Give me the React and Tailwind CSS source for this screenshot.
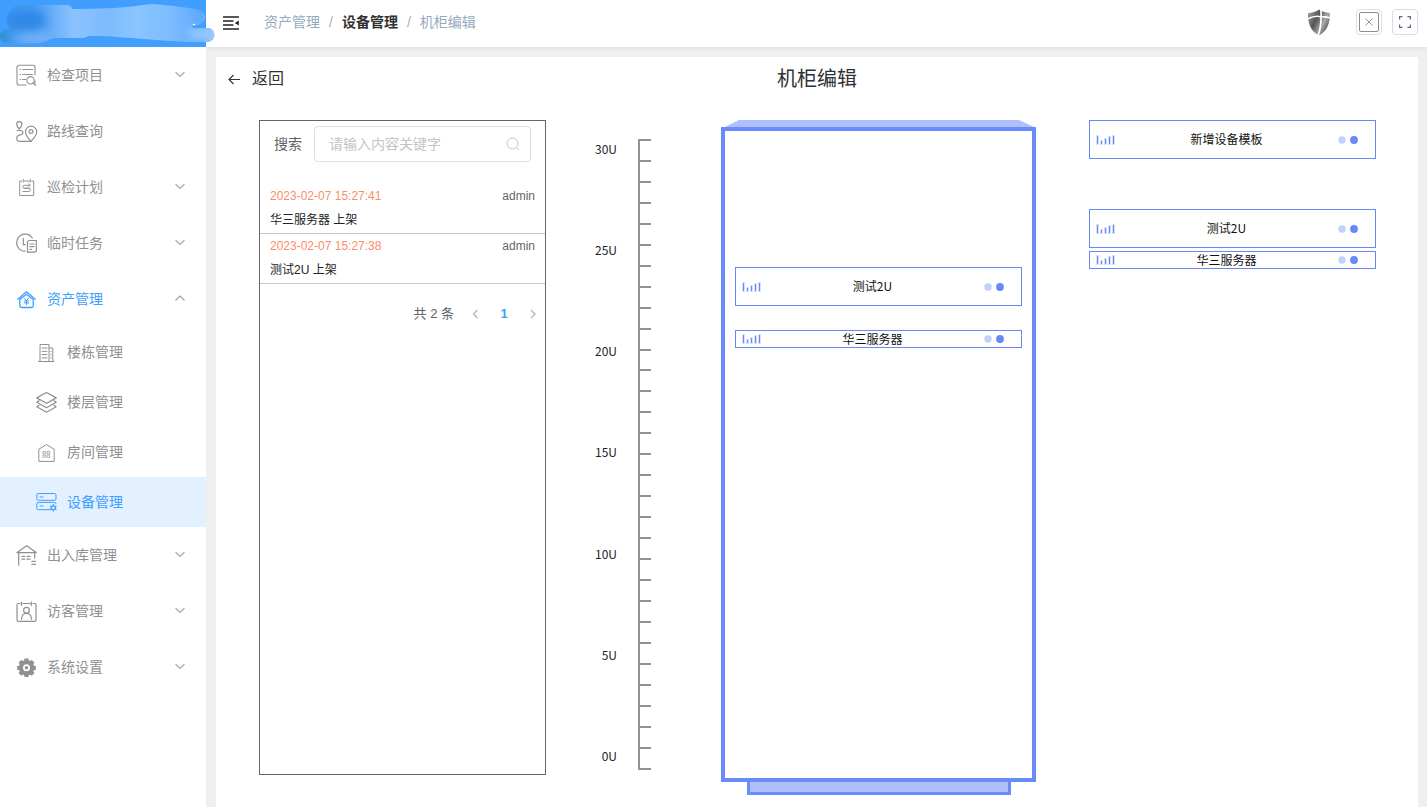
import React from "react";

const CJK = "font-['Liberation_Sans','Noto_Sans_CJK_SC',sans-serif]";
const CJK_ONLY = "font-['Noto_Sans_CJK_SC',sans-serif]";

function Icon({ children, width = 1.1 }) {
  return (
    <svg viewBox="0 0 22 22" className="size-[22px] shrink-0" fill="none" stroke="currentColor" strokeWidth={width} strokeLinecap="round" strokeLinejoin="round" aria-hidden="true">
      {children}
    </svg>
  );
}

const icons = {
  inspect: (
    <Icon>
      <path d="M10 21H3a2 2 0 0 1-2-2V3.300a2 2 0 0 1 2-2h14.500a1.500 1.500 0 0 1 1.500 1.500V11M19 17v2.500" />
      <path d="M4 5.500h.6M7 5.500h9.500M4 10.500h.6M7 10.500h9.500M4 15.500h.6M6.500 15.500h3" />
      <circle cx="14.500" cy="16.300" r="3.700" />
      <path d="M17.200 19l2.500 2.500" />
    </Icon>
  ),
  route: (
    <Icon width={1.2}>
      <path d="M3.200 9C1.800 7.500.7 6 .7 4.200a2.600 2.600 0 0 1 5.200 0C5.900 6 4.700 7.500 3.200 9z" />
      <path d="M1 10.500h3c2.200.2 3 1 3 2.200s-1 1.900-2.300 2.100C2 15 .8 16.300.8 18.200.8 20.300 2 21.400 4 21.400h11" />
      <path d="M15 21.400c-3.300-3.500-5.500-6.400-5.500-9.600a5.600 5.600 0 0 1 11.200 0c0 3.200-2.300 6.100-5.700 9.600z" />
      <circle cx="15" cy="11.500" r="1.900" />
    </Icon>
  ),
  plan: (
    <Icon width={1}>
      <path d="M5.500 5H3.700v14.500h14V5h-2M8.500 5h4.500M7.200 3.300v3M14.200 3.300v3" />
      <path d="M14 9.300H8.200a1.400 1.400 0 0 0 0 2.900h4.500a1.600 1.600 0 0 1 0 3.300H7.500M12.800 8l1.400 1.300-1.400 1.300M9 12.200h4M7 15.500h2" />
    </Icon>
  ),
  task: (
    <Icon width={1.2}>
      <path d="M9 19.200A8.500 8.500 0 1 1 16.300 6M7.300 6.500v6.200h2" />
      <path d="M11.500 10.500v9.700h6.500c1.400 0 2.300-.8 2.300-2.200V8.500h-6.800a2 2 0 0 0-2 2zM14 12h4M14 14.700h4M14 17.400h1.500" />
    </Icon>
  ),
  asset: (
    <Icon width={1.3}>
      <path d="M1.800 11.200l8.700-7.400 8.700 7.400" />
      <path d="M3.800 11.600v6.100c0 1.200.6 1.800 1.800 1.800h9.800c1.200 0 1.800-.6 1.800-1.800v-6.100l-6.700-5.300z" />
      <path d="M8.600 10.400l1.900 2.300 1.900-2.300M8.300 13h4.400M8.300 14.900h4.400M10.500 12.700v4" strokeWidth="1" />
    </Icon>
  ),
  building: (
    <Icon width={1}>
      <path d="M2.500 20.500h15.500M4 20V3.500h9V20M13 7h3.800v13M6 7h5M6 10.300h5M6 13.600h5M6 16.900h5M15 10.300v.5M15 13.500v.5M15 16.700v.5" />
    </Icon>
  ),
  floors: (
    <Icon width={1.2}>
      <path d="M10.500 1.500l9.800 5.400-9.800 5.400L.7 6.900z" />
      <path d="M3 9.700L.8 11.300l9.700 5.500 9.700-5.500L18 9.700M3 14.300L.8 15.800l9.700 5.400 9.700-5.400-2.200-1.500" />
    </Icon>
  ),
  room: (
    <Icon width={1}>
      <path d="M2.800 20V8.300L10.500 3.500l7.700 4.800V20z" />
      <path d="M7.300 10.500h2.300v2.300H7.300zM11.500 10.500h2.300v2.300h-2.300zM7.300 14h2.300v2.300H7.300zM11.500 14h2.300v2.300h-2.300z" strokeWidth=".7" />
    </Icon>
  ),
  device: (
    <Icon width={1}>
      <rect x=".8" y="2.500" width="19.200" height="6.800" rx="1.500" />
      <path d="M14 18.700H2.300a1.500 1.500 0 0 1-1.500-1.500v-4.300a1.500 1.500 0 0 1 1.500-1.500h16.200A1.500 1.500 0 0 1 20 12.900M4 6h3M4 15h3" />
      <circle cx="17.300" cy="16.800" r="2" strokeWidth="1.300" />
      <path d="M17.300 14.300v-.6M17.300 19.900v-.6M15.200 15.600l-.5-.3M19.900 18.300l-.5-.3M15.200 18l-.5.300M19.900 15.300l-.5.300" strokeWidth="1.400" />
    </Icon>
  ),
  warehouse: (
    <Icon width={1.2}>
      <path d="M1 8.600l9.700-6.900 9.500 6.900zM2.700 8.600v12.600M18.700 8.600v5.500" />
      <path d="M6 12.300h2.700M11 12.300h3M6 15.200h2.700M11 15.200h3M15.800 17.300h3.700M15.800 20.300h3.700" />
    </Icon>
  ),
  visitor: (
    <Icon width={1.2}>
      <path d="M4 3.500H2.300A1.300 1.300 0 0 0 1 4.800v15.300a1.300 1.300 0 0 0 1.300 1.300h16.400a1.300 1.300 0 0 0 1.300-1.300V4.800a1.300 1.300 0 0 0-1.300-1.300H17M7 3.500h7M5.500 2v3.500M15.300 2v3.500" />
      <circle cx="10.500" cy="10.200" r="2.900" />
      <path d="M5.500 19.300c.2-3.600 2-6 5-6s4.900 2.400 5.100 6" />
    </Icon>
  ),
  settings: (
    <Icon width={0}>
      <path
        fill="currentColor"
        fillRule="evenodd"
        d="M8.600 2.500h3.800l.5 2.100 1 .4 1.900-1.100 2.600 2.600-1.100 1.900.4 1 2.100.5v3.800l-2.100.5-.4 1 1.100 1.900-2.600 2.600-1.900-1.100-1 .4-.5 2.100H8.600l-.5-2.100-1-.4-1.900 1.100-2.600-2.600 1.100-1.900-.4-1-2.100-.5V9.900l2.100-.5.4-1-1.100-1.900 2.600-2.600L7.100 5l1-.4zM10.500 8.300a3.500 3.500 0 1 0 0 7 3.500 3.500 0 0 0 0-7z"
      />
      <circle cx="10.500" cy="11.800" r="1.700" fill="currentColor" />
    </Icon>
  ),
};

const menu = [
  { label: "检查项目", icon: "inspect", arrow: true },
  { label: "路线查询", icon: "route" },
  { label: "巡检计划", icon: "plan", arrow: true },
  { label: "临时任务", icon: "task", arrow: true },
  {
    label: "资产管理",
    icon: "asset",
    arrow: true,
    open: true,
    children: [
      { label: "楼栋管理", icon: "building" },
      { label: "楼层管理", icon: "floors" },
      { label: "房间管理", icon: "room" },
      { label: "设备管理", icon: "device", active: true },
    ],
  },
  { label: "出入库管理", icon: "warehouse", arrow: true },
  { label: "访客管理", icon: "visitor", arrow: true },
  { label: "系统设置", icon: "settings", arrow: true },
];

function Brand() {
  return (
    <div className="h-[47px] bg-[#409eff]">
      <svg viewBox="0 0 216 47" className="h-[47px] w-[216px]" aria-hidden="true">
        <defs>
          <linearGradient id="smear" x1="0" x2="216" gradientUnits="userSpaceOnUse">
            <stop offset="0" stopColor="#3f97ee" />
            <stop offset=".16" stopColor="#4a9cf4" />
            <stop offset=".34" stopColor="#8ac2fe" />
            <stop offset=".5" stopColor="#7dbbfe" />
            <stop offset=".63" stopColor="#8cc4ff" />
            <stop offset=".8" stopColor="#7bbbff" />
            <stop offset=".93" stopColor="#5caaff" />
            <stop offset="1" stopColor="#a9d1fe" />
          </linearGradient>
          <filter id="soft" x="-40%" y="-60%" width="180%" height="220%">
            <feGaussianBlur stdDeviation="5" />
          </filter>
          <clipPath id="smearShape">
            <path d="M6.500 21C6 15 10 7 18 5h48c4 0 6 2 6 4 28 0 45-1 60-2.500 8-1 14-2.500 22-2.500 14 1 28 3 38 4.500 8 1 13 4 13 8.500 0 5-4 8-13 9 0 2 2 2 6 2h11c4 1 5.500 4 5.500 7s-2 7-7 7c-26 1-60-3-85-4.500-10-1-20-1.500-34-1.500-2 1-3 2-7 2H58c-7 0-9 2-14 4-6 2-34 2-39 0C1 42 0 39 0 36c0-4 4-7 10-7-2-2-3-5-3.500-8z" />
          </clipPath>
        </defs>
        <g clipPath="url(#smearShape)">
          <rect width="216" height="47" fill="url(#smear)" />
          <ellipse cx="26" cy="20" rx="20" ry="10" fill="#2f87e6" filter="url(#soft)" />
          <ellipse cx="34" cy="39" rx="20" ry="5" fill="#78b5f6" filter="url(#soft)" />
          <ellipse cx="0" cy="37" rx="7" ry="8" fill="#2f8fc4" filter="url(#soft)" />
          <ellipse cx="201" cy="34" rx="14" ry="6" fill="#9ccbff" filter="url(#soft)" />
        </g>
        <path d="M193 25l2-1" stroke="#fff" strokeWidth="1.300" />
      </svg>
    </div>
  );
}

function Chevron({ open }) {
  return (
    <svg viewBox="0 0 12 8" className="mr-5 mb-[3px] ml-auto h-2 w-3" fill="none" stroke={open ? "#8fa0b5" : "#b9a396"} strokeWidth="1.100" aria-hidden="true">
      <path d={open ? "M1.500 6.500L6 2l4.500 4.500" : "M1.500 2L6 6.500 10.500 2"} />
    </svg>
  );
}

function Sidebar() {
  return (
    <aside className="relative z-20 w-[206px] shrink-0 bg-white">
      <Brand />
      <nav>
        <ul>
          {menu.map((item) => (
            <li key={item.label}>
              <a href="#" className={`flex h-14 items-center gap-[9px] pl-4 text-sm ${item.open ? "text-[#409eff]" : "text-[#909090]"}`}>
                {icons[item.icon]}
                <span>{item.label}</span>
                {item.arrow && <Chevron open={item.open} />}
              </a>
              {item.children && (
                <ul>
                  {item.children.map((sub) => (
                    <li key={sub.label}>
                      <a href="#" className={`flex h-[50px] items-center gap-[9px] pl-9 text-sm ${sub.active ? "bg-[#e2f0ff] text-[#409eff]" : "text-[#909090]"}`}>
                        {icons[sub.icon]}
                        <span>{sub.label}</span>
                      </a>
                    </li>
                  ))}
                </ul>
              )}
            </li>
          ))}
        </ul>
      </nav>
    </aside>
  );
}

function TopBar() {
  return (
    <header className="relative z-10 flex h-[47px] items-center bg-white pr-[9px] pb-[3px] pl-[17px] shadow-[0_1px_4px_rgba(0,21,41,0.08)]">
      <button type="button" aria-label="收起菜单" className="mt-[2px] mr-[25px]">
        <svg viewBox="0 0 16 14" className="h-[14px] w-4" aria-hidden="true">
          <path d="M0 1h16M0 5h10.500M0 9h10.500M0 13h16" stroke="#222" strokeWidth="1.600" />
          <path d="M15.800 4.500v5L11.800 7z" fill="#222" />
        </svg>
      </button>
      <nav aria-label="面包屑" className="flex items-center text-sm text-[#97a8be]">
        <a href="#">资产管理</a>
        <span className="mx-[9px] text-[#a8adb8]">/</span>
        <a href="#" className="font-bold text-[#303133]">设备管理</a>
        <span className="mx-[9px] text-[#a8adb8]">/</span>
        <span>机柜编辑</span>
      </nav>
      <div className="ml-auto flex items-center gap-[10px]">
        <svg viewBox="0 0 24 27" className="mr-[15px] h-[27px] w-6" aria-hidden="true">
          <defs>
            <linearGradient id="steel" x1="0" x2="1" y1="0" y2=".6">
              <stop offset="0" stopColor="#aaa" />
              <stop offset=".45" stopColor="#555" />
              <stop offset=".75" stopColor="#aaa" />
              <stop offset="1" stopColor="#555" />
            </linearGradient>
          </defs>
          <path d="M12 .5c3 2 7 3.300 10.700 3.300.7 10-2.700 18.700-10.700 22.700C4 22.500.3 13.500 1 4.200 5 4 9 2.700 12 .5z" fill="url(#steel)" />
          <path d="M1 9.800c3.500-2 7-2.700 11-2.500 4 .1 7.500.4 11 1.500" stroke="#fff" strokeWidth="1.700" fill="none" />
          <path d="M13.800 0c.8 9 .3 18-2.800 27" stroke="#fff" strokeWidth="1.700" fill="none" />
        </svg>
        <button type="button" aria-label="关闭" className="grid size-[26px] place-items-center rounded border border-[#dcdfe6]">
          <svg viewBox="0 0 20 20" className="size-5" fill="none" aria-hidden="true">
            <rect x=".5" y=".5" width="19" height="19" rx="1.500" stroke="#8c8c8c" />
            <path d="M6.500 6.500l7 7M13.500 6.500l-7 7" stroke="#999" />
          </svg>
        </button>
        <button type="button" aria-label="全屏" className="grid size-[26px] place-items-center rounded border border-[#d8dce5]">
          <svg viewBox="0 0 12 12" className="size-3" fill="none" stroke="#5d6b80" strokeWidth="1.200" aria-hidden="true">
            <path d="M.6 3.500V.6h2.900M8.500.6h2.900v2.900M11.400 8.500v2.900H8.500M3.500 11.400H.6V8.500" />
          </svg>
        </button>
      </div>
    </header>
  );
}

const logs = [
  { time: "2023-02-07 15:27:41", user: "admin", text: "华三服务器 上架" },
  { time: "2023-02-07 15:27:38", user: "admin", text: "测试2U 上架" },
];

function LogPanel() {
  return (
    <section className="border border-[#666] pt-[5px]">
      <form className="flex items-center gap-3 px-[14px]">
        <label htmlFor="keyword" className="shrink-0 text-sm text-[#606266]">搜索</label>
        <div className="flex h-9 min-w-0 flex-1 items-center rounded border border-[#dcdfe6] pr-[10px] pl-[14px]">
          <input id="keyword" type="text" placeholder="请输入内容关键字" className="min-w-0 flex-1 text-sm outline-none placeholder:text-[#c0c4cc]" />
          <svg viewBox="0 0 14 14" className="size-[14px] shrink-0" fill="none" stroke="#c0c4cc" aria-hidden="true">
            <circle cx="6.500" cy="6.500" r="5.500" />
            <path d="M10.500 10.500l2.500 2.500" />
          </svg>
        </div>
      </form>
      <ul className="mt-[22px] text-xs">
        {logs.map((log) => (
          <li key={log.time} className="border-b border-[#c8c8c8] px-[10px] pb-px">
            <div className="flex justify-between leading-6">
              <time className="text-[#fb8d6b]">{log.time}</time>
              <span className="text-[#666]">{log.user}</span>
            </div>
            <p className="leading-6 text-[#222]">{log.text}</p>
          </li>
        ))}
      </ul>
      <nav aria-label="分页" className="mt-4 flex h-7 items-center justify-end gap-[5px] text-[13px]">
        <span className="mr-1 text-[#606266]">共 2 条</span>
        <button type="button" aria-label="上一页" disabled className="grid h-7 w-6 place-items-center">
          <svg viewBox="0 0 8 12" className="h-3 w-2" fill="none" stroke="#b4b8c0" strokeWidth="1.400" aria-hidden="true"><path d="M6.500 2L2.500 6l4 4" /></svg>
        </button>
        <button type="button" aria-current="page" className="h-7 w-6 font-bold text-[#409eff]">1</button>
        <button type="button" aria-label="下一页" disabled className="grid h-7 w-6 place-items-center">
          <svg viewBox="0 0 8 12" className="h-3 w-2" fill="none" stroke="#b4b8c0" strokeWidth="1.400" aria-hidden="true"><path d="M2 2l4 4-4 4" /></svg>
        </button>
      </nav>
    </section>
  );
}

const ticks = Array.from({ length: 31 }, (_, i) => i);

function Ruler() {
  return (
    <div className="flex gap-[21px] pt-[19px]">
      <ol className="flex h-[631px] w-[71px] flex-col justify-between pb-1 text-right text-xs text-[#222]">
        {[30, 25, 20, 15, 10, 5, 0].map((u) => (
          <li key={u} className={`leading-5 ${CJK_ONLY}`}>{u}U</li>
        ))}
      </ol>
      <div className="flex h-[631px] w-[13px] flex-col justify-between border-l-2 border-[#929292]">
        {ticks.map((t) => (
          <span key={t} className="h-[2px] bg-[#929292]" />
        ))}
      </div>
    </div>
  );
}

function Device({ name, tall }) {
  return (
    <button type="button" className={`flex w-full items-center border border-[#6888f7] bg-white pr-[17px] pl-[6px] ${tall ? "h-[39px]" : "h-[18px]"}`}>
      <svg viewBox="0 0 19 10" className="h-[10px] w-[19px] shrink-0" stroke="#6888f7" aria-hidden="true">
        <path d="M1.500 1v8M5.500 6v3M9.500 4v5M13.500 2v7M17.500 1v8" />
        <path d="M1.500 0v10M5.500 5v5M9.500 3v7M13.500 1v9M17.500 0v10" strokeWidth="3" opacity=".25" />
      </svg>
      <span className={`flex-1 text-center text-xs leading-4 text-[#111] ${tall ? "pb-[2px]" : ""} ${CJK_ONLY}`}>{name}</span>
      <svg viewBox="0 0 20 8" className="h-2 w-5 shrink-0" aria-hidden="true">
        <circle cx="4" cy="4" r="3.700" fill="#c3d0fc" />
        <circle cx="16" cy="4" r="3.900" fill="#6888f7" />
      </svg>
    </button>
  );
}

function Rack() {
  return (
    <section aria-label="机柜">
      <svg viewBox="0 0 315 7" preserveAspectRatio="none" className="block h-[7px] w-full" aria-hidden="true">
        <path d="M4 7L18 0h280l15 7z" fill="#afbffb" />
      </svg>
      <div className="flex h-[655px] flex-col gap-6 border-4 border-[#6a8bfa] px-[10px] pt-[136px]">
        <Device name="测试2U" tall />
        <Device name="华三服务器" />
      </div>
      <div className="mr-[25px] ml-[26px] h-[13px] border-[3px] border-t-0 border-[#6a8bfa] bg-[#afbffb]" />
    </section>
  );
}

export default function App() {
  return (
    <div className={`flex min-h-screen bg-[#efefef] ${CJK}`}>
      <Sidebar />
      <div className="flex min-w-0 flex-1 flex-col">
        <TopBar />
        <main className="mt-[10px] mr-[9px] ml-[10px] flex-1 bg-white">
          <div className="grid h-11 grid-cols-[1fr_auto_1fr] items-center px-3">
            <button type="button" className="flex items-center gap-3 text-base text-[#303133]">
              <svg viewBox="0 0 12 12" className="size-3" fill="none" stroke="#333" strokeWidth="1.100" aria-hidden="true">
                <path d="M12 6.500H1M5.500 2L1 6.500 5.500 11" />
              </svg>
              返回
            </button>
            <h1 className="text-xl text-[#303133]">机柜编辑</h1>
          </div>
          <div className="mt-[19px] mr-[42px] mb-3 ml-[43px] grid grid-cols-[287fr_175fr_315fr_53fr_287fr]">
            <div className="grid h-[655px]">
              <LogPanel />
            </div>
            <Ruler />
            <Rack />
            <section aria-label="设备模板" className="col-start-5">
              <Device name="新增设备模板" tall />
              <div className="mt-[50px] flex flex-col gap-[3px]">
                <Device name="测试2U" tall />
                <Device name="华三服务器" />
              </div>
            </section>
          </div>
        </main>
      </div>
    </div>
  );
}
